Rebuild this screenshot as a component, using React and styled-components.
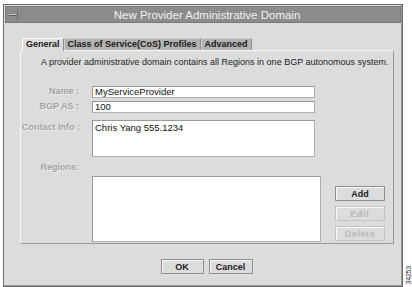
import styled, { createGlobalStyle } from 'styled-components';

const GlobalStyle = createGlobalStyle`
  body {
    margin: 0;
    background: #fff;
    font-family: 'Liberation Sans', Arial, sans-serif;
  }
`;

const Page = styled.div`
  width: 412px;
  height: 287px;
  box-sizing: border-box;
  padding: 3px 0 0 3px;
  display: flex;
  align-items: flex-end;
`;

const Window = styled.div`
  width: 400px;
  height: 283px;
  flex: none;
  box-sizing: border-box;
  border: 1px solid #6a6a6a;
  background: #dcdcdc;
  display: flex;
  flex-direction: column;
  padding: 1px;
  box-shadow: inset -1px -1px 0 #9a9a9a;
`;

const TitleBar = styled.div`
  height: 17px;
  flex: none;
  background: #8b8b8b;
  border: 1px solid #7a7a7a;
  box-sizing: border-box;
  display: flex;
  align-items: center;
`;

const MenuButton = styled.div`
  width: 11px;
  height: 10px;
  margin-left: 1px;
  box-sizing: border-box;
  border-right: 1px solid #6d6d6d;
  display: flex;
  align-items: center;
  justify-content: center;

  &::after {
    content: '';
    width: 7px;
    height: 1px;
    background: #c8c8c8;
    box-shadow: 0 1px 0 #5e5e5e;
  }
`;

const Title = styled.div`
  flex: 1;
  text-align: center;
  color: #f2f2f2;
  font-size: 11.5px;
  margin-right: 4px;
`;

const Body = styled.div`
  flex: 1;
  display: flex;
  flex-direction: column;
  padding: 15px 7px 0 15px;
`;

const TabRow = styled.div`
  display: flex;
  height: 12px;
  margin-left: 2px;
`;

const Tab = styled.div`
  height: 12px;
  box-sizing: border-box;
  padding: 0 3px;
  font-size: 9px;
  font-weight: bold;
  line-height: 11px;
  color: #1a1a1a;
  background: ${(p) => (p.$active ? '#dcdcdc' : '#b3b3b3')};
  border-top: 1px solid ${(p) => (p.$active ? '#fafafa' : '#cfcfcf')};
  border-left: 1px solid ${(p) => (p.$active ? '#fafafa' : '#cfcfcf')};
  border-right: 1px solid #8e8e8e;
  position: relative;
  z-index: ${(p) => (p.$active ? 1 : 0)};
  ${(p) => p.$active && 'height: 13px; margin-bottom: -1px;'}
`;

const Panel = styled.div`
  height: 194px;
  box-sizing: border-box;
  border-top: 1px solid #f6f6f6;
  border-left: 1px solid #f6f6f6;
  border-right: 1px solid #9a9a9a;
  border-bottom: 1px solid #9a9a9a;
  padding: 6px 7px 0 1px;
  display: flex;
  flex-direction: column;
`;

const Description = styled.div`
  font-size: 9px;
  line-height: 11px;
  color: #1e1e1e;
  padding-left: 19px;
  white-space: nowrap;
`;

const Form = styled.div`
  margin-top: 18px;
  display: grid;
  grid-template-columns: 57px 223px;
  column-gap: 13px;
  row-gap: 3px;
  align-items: start;
`;

const Label = styled.div`
  font-size: 9px;
  font-weight: bold;
  color: #a2a2a2;
  text-align: right;
  white-space: nowrap;
  line-height: 11px;
  padding-top: ${(p) => p.$top || 0}px;
  text-shadow: 1px 1px 0 #eeeeee;
`;

const Field = styled.div`
  height: ${(p) => p.$h || 12}px;
  box-sizing: border-box;
  background: #fff;
  border: 1px solid #b0b0b0;
  border-top-color: #999;
  border-left-color: #999;
  font-size: 9.5px;
  color: #111;
  padding: ${(p) => p.$pt || 0}px 2px 0;
  line-height: 10px;
  margin-top: ${(p) => p.$mt || 0}px;
`;

const RegionsLabel = styled(Label)`
  width: 57px;
  margin-top: 5px;
`;

const RegionsRow = styled.div`
  display: flex;
  margin-top: 3px;
  margin-left: 70px;
`;

const List = styled.div`
  width: 229px;
  height: 66px;
  box-sizing: border-box;
  background: #fff;
  border: 1px solid #b0b0b0;
  border-top-color: #999;
  border-left-color: #999;
`;

const ButtonColumn = styled.div`
  display: flex;
  flex-direction: column;
  gap: 5px;
  margin-left: 14px;
  padding-top: 10px;
`;

const Button = styled.button`
  width: ${(p) => p.$w || 50}px;
  height: 15px;
  box-sizing: border-box;
  padding: 0;
  font-family: 'Liberation Sans', Arial, sans-serif;
  font-size: 9px;
  font-weight: bold;
  color: ${(p) => (p.disabled ? '#b8b8b8' : '#1a1a1a')};
  background: #dcdcdc;
  border: 1px solid ${(p) => (p.disabled ? '#c4c4c4' : '#8e8e8e')};
  box-shadow: inset 1px 1px 0 #f8f8f8;
  cursor: default;
  letter-spacing: ${(p) => (p.disabled ? '0.6px' : '0')};
`;

const Footer = styled.div`
  display: flex;
  justify-content: center;
  gap: 5px;
  padding-top: 15px;
  margin-left: -1px;
`;

const FigureNumber = styled.div`
  writing-mode: vertical-rl;
  transform: rotate(180deg);
  font-size: 7px;
  line-height: 7px;
  color: #333;
  margin: 0 0 3px 2px;
  letter-spacing: -0.2px;
`;

export default function App() {
  return (
    <>
      <GlobalStyle />
      <Page>
        <Window>
          <TitleBar>
            <MenuButton />
            <Title>New Provider Administrative Domain</Title>
          </TitleBar>
          <Body>
            <TabRow>
              <Tab $active>General</Tab>
              <Tab>Class of Service(CoS) Profiles</Tab>
              <Tab>Advanced</Tab>
            </TabRow>
            <Panel>
              <Description>
                A provider administrative domain contains all Regions in one BGP autonomous system.
              </Description>
              <Form>
                <Label>Name :</Label>
                <Field>MyServiceProvider</Field>
                <Label>BGP AS :</Label>
                <Field>100</Field>
                <Label $top={6}>Contact Info :</Label>
                <Field $h={37} $mt={4} $pt={2}>Chris Yang 555.1234</Field>
              </Form>
              <RegionsLabel>Regions:</RegionsLabel>
              <RegionsRow>
                <List />
                <ButtonColumn>
                  <Button>Add</Button>
                  <Button disabled>Edit</Button>
                  <Button disabled>Delete</Button>
                </ButtonColumn>
              </RegionsRow>
            </Panel>
            <Footer>
              <Button $w={43}>OK</Button>
              <Button $w={44}>Cancel</Button>
            </Footer>
          </Body>
        </Window>
        <FigureNumber>34253</FigureNumber>
      </Page>
    </>
  );
}
